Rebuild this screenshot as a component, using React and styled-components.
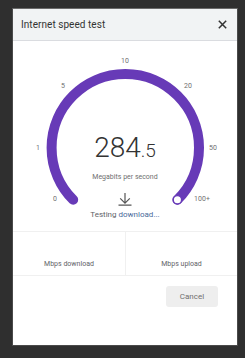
import React from "react";
import styled, { createGlobalStyle } from "styled-components";

const Global = createGlobalStyle`
  html, body { margin: 0; padding: 0; background: #2f2f2f; }
  body { font-family: Roboto, "Noto Sans", Arial, sans-serif; }
  * { box-sizing: border-box; }
`;

const Page = styled.div`
  width: 245px;
  height: 358px;
  padding: 8px 0 0 12px;
`;

const Dialog = styled.div`
  width: 226px;
  height: 338px;
  background: #fff;
  border: 1px solid #4a4a4a;
  border-top-color: #6a6a6a;
  display: flex;
  flex-direction: column;
`;

const Header = styled.div`
  height: 32px;
  flex: none;
  background: #f1f3f4;
  border-bottom: 1px solid #dadce0;
  display: flex;
  align-items: center;
  justify-content: space-between;
  padding: 0 9px 0 8px;
`;

const Title = styled.div`
  font-size: 10px;
  color: #333;
  letter-spacing: 0.05px;
`;

const Close = styled.button`
  border: 0;
  background: none;
  padding: 0;
  width: 11px;
  height: 11px;
  display: flex;
  align-items: center;
  justify-content: center;
  cursor: pointer;
`;

const GaugeSection = styled.div`
  position: relative;
  height: 191px;
  flex: none;
  border-bottom: 1px solid #f0f0f0;
  display: flex;
  flex-direction: column;
  align-items: center;
  padding-top: 93px;
`;

const Arc = styled.svg`
  position: absolute;
  left: 0;
  top: 0;
`;

const Tick = styled.span`
  position: absolute;
  transform: translate(-50%, -50%);
  font-size: 7px;
  line-height: 8px;
  color: #6f6f6f;
`;

const Reading = styled.div`
  position: relative;
  color: #333;
  font-weight: 300;
  line-height: 28px;
  height: 28px;
  white-space: nowrap;
`;

const Whole = styled.span`
  font-size: 28px;
`;

const Fraction = styled.span`
  font-size: 19px;
`;

const Unit = styled.div`
  position: relative;
  margin-top: 10px;
  font-size: 7px;
  line-height: 10px;
  color: #6f6f6f;
`;

const Arrow = styled.svg`
  position: relative;
  margin-top: 11px;
  flex: none;
`;

const Status = styled.div`
  position: relative;
  margin-top: 4px;
  font-size: 8px;
  line-height: 10px;
  color: #5f6368;
`;

const Link = styled.span`
  color: ${(p) => p.$color};
`;

const Stats = styled.div`
  height: 44px;
  flex: none;
  display: grid;
  grid-template-columns: 1fr 1fr;
  border-bottom: 1px solid #f0f0f0;
`;

const Stat = styled.div`
  display: flex;
  flex-direction: column;
  align-items: center;
  justify-content: flex-end;
  padding-bottom: 6px;
  font-size: 7px;
  line-height: 10px;
  color: #5f6368;
  border-left: ${(p) => (p.$divider ? "1px solid #f0f0f0" : "none")};
`;

const Footer = styled.div`
  display: flex;
  justify-content: flex-end;
  padding: 10px 19px 0 0;
`;

const Button = styled.button`
  width: 52px;
  height: 21px;
  border: 0;
  border-radius: 3px;
  background: #eeeeee;
  font-family: inherit;
  font-size: 8px;
  color: #6f6f6f;
  padding: 0;
  cursor: pointer;
`;

const CX = 112.3;
const CY = 106.7;
const R = 73.7;
const D = R * Math.SQRT1_2;

const ticks = [
  { t: "10", x: 112, y: 20 },
  { t: "5", x: 50, y: 45 },
  { t: "20", x: 175, y: 45 },
  { t: "1", x: 25, y: 107 },
  { t: "50", x: 200, y: 107 },
  { t: "0", x: 42, y: 158 },
  { t: "100+", x: 189, y: 158 },
];

export default function App() {
  return (
    <>
      <Global />
      <Page>
        <Dialog>
          <Header>
            <Title>Internet speed test</Title>
            <Close aria-label="Close">
              <svg width="9" height="9" viewBox="0 0 9 9">
                <path d="M0.8 0.8 L8.2 8.2 M8.2 0.8 L0.8 8.2" stroke="#333" strokeWidth="1.5" fill="none" />
              </svg>
            </Close>
          </Header>
          <GaugeSection>
            <Arc width="224" height="191" viewBox="0 0 224 191">
              <path
                d={`M ${CX - D} ${CY + D} A ${R} ${R} 0 1 1 ${CX + D} ${CY + D}`}
                stroke="#673ab7"
                strokeWidth="10"
                fill="none"
                strokeLinecap="round"
              />
              <circle cx={CX + D} cy={CY + D} r="4.2" fill="#fff" stroke="#673ab7" strokeWidth="1.4" />
            </Arc>
            {ticks.map((k) => (
              <Tick key={k.t} style={{ left: k.x, top: k.y }}>
                {k.t}
              </Tick>
            ))}
            <Reading>
              <Whole>284</Whole>
              <Fraction>.5</Fraction>
            </Reading>
            <Unit>Megabits per second</Unit>
            <Arrow width="14" height="13" viewBox="0 0 14 13">
              <path d="M7 0 V10 M2.2 5.4 L7 10.2 L11.8 5.4 M0.5 12.2 H13.5" stroke="#555" strokeWidth="1.2" fill="none" />
            </Arrow>
            <Status>
              Testing <Link $color="#4a6a9a">download...</Link>
            </Status>
          </GaugeSection>
          <Stats>
            <Stat>Mbps download</Stat>
            <Stat $divider>Mbps upload</Stat>
          </Stats>
          <Footer>
            <Button>Cancel</Button>
          </Footer>
        </Dialog>
      </Page>
    </>
  );
}
